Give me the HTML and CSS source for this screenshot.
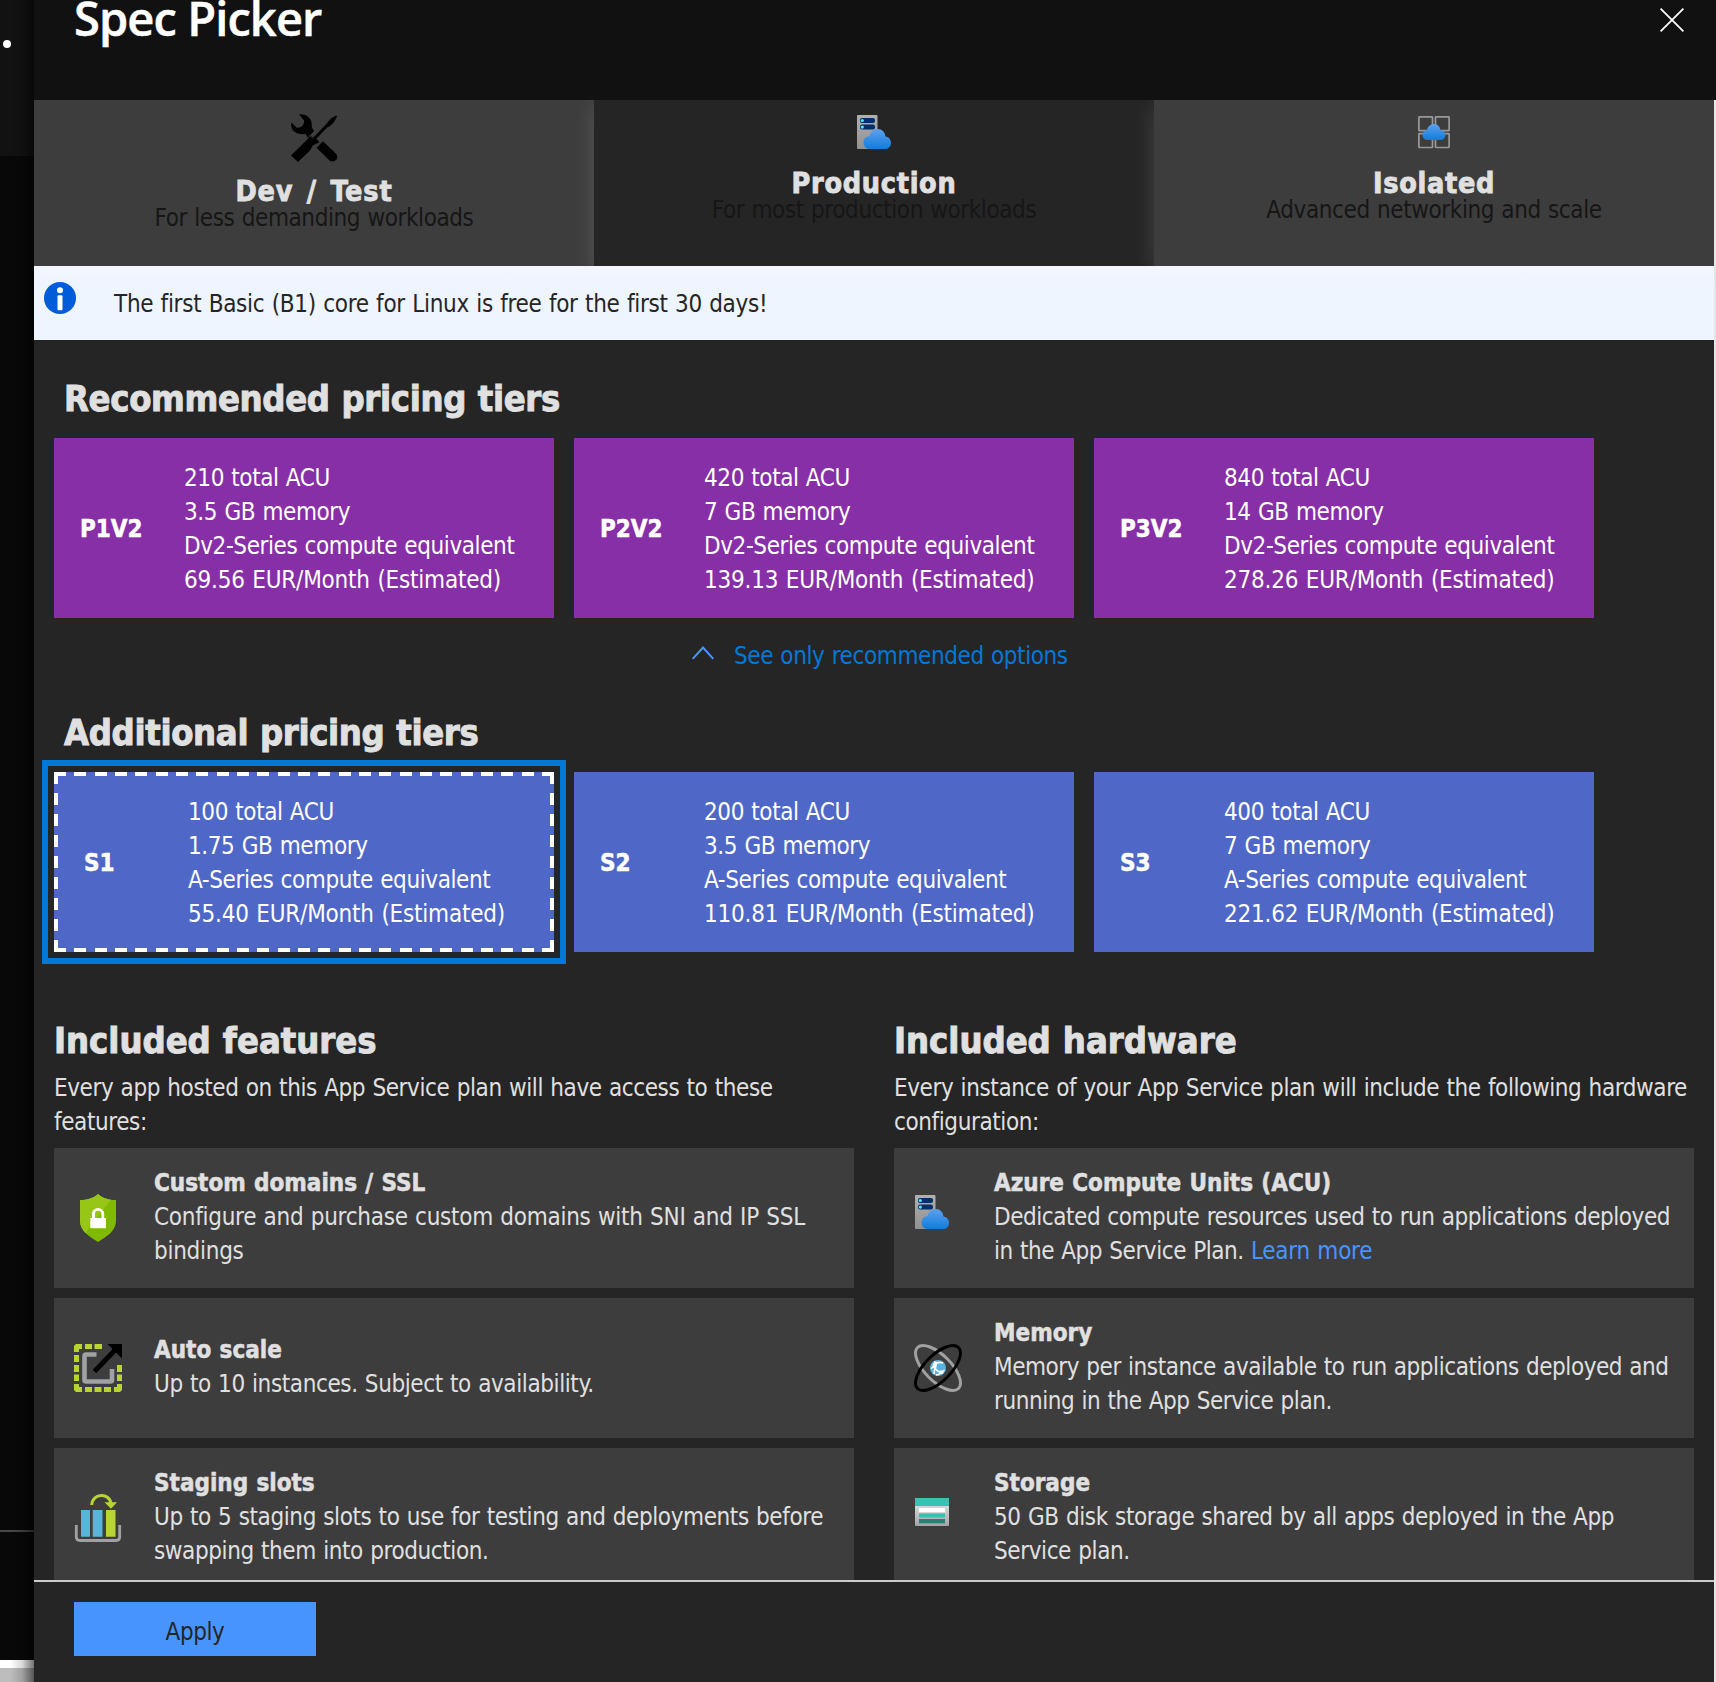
FILE: index.html
```html
<!DOCTYPE html>
<html lang="en">
<head>
<meta charset="utf-8">
<title>Spec Picker</title>
<link rel="stylesheet" href="styles.css">
</head>
<body>
<svg width="0" height="0" class="defs" aria-hidden="true">
  <defs>
    <linearGradient id="cloud" x1="0" y1="0" x2="0" y2="1"><stop offset="0" stop-color="#5ea0ef"/><stop offset="1" stop-color="#0f7ddb"/></linearGradient>
    <linearGradient id="metal" x1="0" y1="0" x2="0" y2="1"><stop offset="0" stop-color="#b0b0b0"/><stop offset="1" stop-color="#919191"/></linearGradient>
    <linearGradient id="paper" x1="0" y1="0" x2="0" y2="1"><stop offset="0" stop-color="#ececec"/><stop offset="1" stop-color="#a3a3a3"/></linearGradient>
    <symbol id="server" viewBox="0 0 34 34">
      <rect width="20.5" height="34" rx="1" fill="url(#metal)"/>
      <rect x="3" y="3" width="15" height="5" rx="2" fill="#003067"/>
      <rect x="3" y="9.6" width="15" height="5" rx="2" fill="#003067"/>
      <circle cx="5.3" cy="5.5" r="1.6" fill="#50e6ff"/><circle cx="5.3" cy="12.1" r="1.6" fill="#50e6ff"/>
      <path d="M12.8 34C9.2 34 6.5 31 6.5 27.4C6.5 23.9 9 21.2 12.5 20.9C13.4 16.9 16.5 14 20.7 14C25 14 28.2 17.3 28.5 21.6C31.7 22 34 24.7 34 27.9C34 31.3 31.4 34 28 34Z" fill="url(#cloud)"/>
    </symbol>
  </defs>
</svg>
<div class="page">
  <aside class="behind">
    <div class="behind-head"><span class="dot"></span></div>
    <div class="behind-main"></div>
    <div class="behind-foot"></div>
    <div class="behind-white"></div>
    <div class="behind-grey"></div>
  </aside>
  <main class="blade">
    <header class="blade-head">
      <h1>Spec Picker</h1>
      <svg class="close" width="24" height="24" viewBox="0 0 24 24" stroke="#fff" stroke-width="1.8"><path d="M.6.6L23.4 23.4M23.4.6L.6 23.4"/></svg>
    </header>
    <nav class="tabs">
      <div class="tab">
        <svg width="48" height="48" viewBox="0 0 48 48">
          <path d="M9 .3C15-.6 20 2.6 21.3 7.6C22.2 11.5 21.3 14 24.2 17L17.6 23.6L15.6 19.8C10 21.4 3.500 18.600 1.800 14.300C1.200 12.500 1 10.800 1.300 8.600L6.800 13.800C11.600 13.900 14.600 10.800 13.900 6.200Z"/>
          <path d="M1 41.500L16.500 26.200L20.300 21.600L24 24.300L27 25.300L29.500 28.200L23 31.300L20 36.500L8 48Z"/>
          <path d="M23.500 25.500L38 10.500" stroke="#000" stroke-width="3"/>
          <path d="M36.200 11.300C37 7.500 42 3 46.300 1.400L47 2.300C45.500 6.500 42 11.500 38 13.200Z"/>
          <path d="M26.500 33.800L33 27.200L46.300 40C49 44.500 45 49 40 47Z"/>
          <path d="M19.500 21.500L23 24.500M26 33.500L29.500 30" stroke="#3d3d3d" stroke-width=".8" fill="none"/>
        </svg>
        <h3 class="wide">Dev / Test</h3>
        <p>For less demanding workloads</p>
      </div>
      <div class="tab active">
        <svg width="40" height="40" viewBox="-3 -1 40 40"><use href="#server" width="34" height="34"/></svg>
        <h3>Production</h3>
        <p>For most production workloads</p>
      </div>
      <div class="tab">
        <svg width="40" height="40" viewBox="-4 -2 40 40">
          <g fill="none" stroke="#999" stroke-width="1.700"><rect x=".9" y=".9" width="13.600" height="13.800" rx=".5"/><rect x="17.500" y=".9" width="13.600" height="13.800" rx=".5"/><rect x=".9" y="17.700" width="13.600" height="13.800" rx=".5"/><rect x="17.500" y="17.700" width="13.600" height="13.800" rx=".5"/></g>
          <path d="M9.500 24C6.700 24 4.500 21.800 4.500 19C4.500 16.200 6.500 14.300 9 14C9.800 10.500 12.500 8 16 8C19.500 8 22 10.400 22.400 13.900C25.200 14.100 27.300 16.200 27.300 19C27.300 21.800 25.200 24 22.400 24Z" fill="url(#cloud)"/>
        </svg>
        <h3>Isolated</h3>
        <p>Advanced networking and scale</p>
      </div>
    </nav>
    <div class="banner">
      <svg width="32" height="32" viewBox="0 0 32 32"><circle cx="16" cy="16" r="16" fill="#015cda"/><circle cx="16" cy="8.300" r="3" fill="#fff"/><rect x="13.500" y="13.300" width="5" height="15" rx="1" fill="#fff"/></svg>
      <p>The first Basic (B1) core for Linux is free for the first 30 days!</p>
    </div>
    <section class="content">
      <h2 class="indent">Recommended pricing tiers</h2>
      <div class="tiers">
        <div class="tier purple"><b>P1V2</b><p>210 total ACU<br>3.5 GB memory<br>Dv2-Series compute equivalent<br><span class="price">69.56 EUR/Month (Estimated)</span></p></div>
        <div class="tier purple"><b>P2V2</b><p>420 total ACU<br>7 GB memory<br>Dv2-Series compute equivalent<br><span class="price">139.13 EUR/Month (Estimated)</span></p></div>
        <div class="tier purple"><b>P3V2</b><p>840 total ACU<br>14 GB memory<br>Dv2-Series compute equivalent<br><span class="price">278.26 EUR/Month (Estimated)</span></p></div>
      </div>
      <a class="toggle"><svg width="22" height="14" viewBox="0 0 22 14" fill="none" stroke="#4894fe" stroke-width="2"><path d="M.700 12.800L11 1.500L21.300 12.800"/></svg><span>See only recommended options</span></a>
      <h2 class="indent">Additional pricing tiers</h2>
      <div class="tiers">
        <div class="tier blue selected"><b>S1</b><p>100 total ACU<br>1.75 GB memory<br>A-Series compute equivalent<br><span class="price">55.40 EUR/Month (Estimated)</span></p></div>
        <div class="tier blue"><b>S2</b><p>200 total ACU<br>3.5 GB memory<br>A-Series compute equivalent<br><span class="price">110.81 EUR/Month (Estimated)</span></p></div>
        <div class="tier blue"><b>S3</b><p>400 total ACU<br>7 GB memory<br>A-Series compute equivalent<br><span class="price">221.62 EUR/Month (Estimated)</span></p></div>
      </div>
      <div class="columns">
        <div class="column">
          <h2>Included features</h2>
          <p class="lead">Every app hosted on this App Service plan will have access to these<br>features:</p>
          <div class="item">
            <svg width="48" height="48" viewBox="0 0 48 48">
              <path d="M24 0C19.500 4.200 13 6 6 6V27C6 37 16 43 24 48C32 43 42 37 42 27V6C35 6 28.500 4.200 24 0Z" fill="#7fba00"/>
              <path d="M24 0C19.500 4.200 13 6 6 6V27C6 32 8.500 36 11.500 39L37 5.800C32 5.200 27.500 3.300 24 0Z" fill="#97c617"/>
              <rect x="16.300" y="24" width="15.700" height="10.200" fill="#fff"/><path d="M19.500 25V20.200C19.500 13.800 28.800 13.800 28.800 20.200V25" fill="none" stroke="#fff" stroke-width="2.800"/>
            </svg>
            <div><b>Custom domains / SSL</b><p class="loose">Configure and purchase custom domains with SNI and IP SSL<br>bindings</p></div>
          </div>
          <div class="item">
            <svg width="48" height="48" viewBox="0 0 48 48">
              <path fill="#b8d432" d="M2 0H8V5H5V8H0V2ZM11 0H18V5H11ZM20.500 0H28V5H20.500ZM0 11H5V18H0ZM0 21H5V28H0ZM0 30.500H5V37H0ZM0 40H5V43H8V48H2L0 46ZM11 43H18V48H11ZM20.500 43H27.500V48H20.500ZM30 43H37V48H30ZM43 40H48V46L46 48H40V43H43ZM43 21H48V28H43ZM43 30.500H48V37H43Z"/>
              <path d="M22.500 10.500H12Q10.500 10.500 10.500 12V36Q10.500 37.500 12 37.500H36.500Q38 37.500 38 36V25" fill="none" stroke="#a0a1a2" stroke-width="4.600"/>
              <path d="M20.500 27.500L42 5" stroke="#000" stroke-width="4.800"/><path d="M33.500 0H48V14.500Z"/>
            </svg>
            <div><b>Auto scale</b><p>Up to 10 instances. Subject to availability.</p></div>
          </div>
          <div class="item">
            <svg width="48" height="48" viewBox="0 0 48 48">
              <path d="M7 16H16V42.700H7ZM18.700 16H28.500V42.700H18.700Z" fill="#59b4d9"/><path d="M32 16H41.500V42.700H32ZM30.500 8.300L43 8.300L37 14.700Z" fill="#b8d432"/>
              <path d="M17.700 11C18.500-1.500 36-1.500 37 10" fill="none" stroke="#b8d432" stroke-width="3"/>
              <path d="M2.300 31V43Q2.300 46.500 6 46.500H42Q45.700 46.500 45.700 43V31" fill="none" stroke="#a0a1a2" stroke-width="2.800"/>
            </svg>
            <div><b>Staging slots</b><p>Up to 5 staging slots to use for testing and deployments before<br>swapping them into production.</p></div>
          </div>
        </div>
        <div class="column">
          <h2>Included hardware</h2>
          <p class="lead">Every instance of your App Service plan will include the following hardware<br>configuration:</p>
          <div class="item">
            <svg width="48" height="48" viewBox="-1 -1 48 48"><use href="#server" width="34" height="34"/></svg>
            <div><b>Azure Compute Units (ACU)</b><p class="tight">Dedicated compute resources used to run applications deployed<br>in the App Service Plan. <a>Learn more</a></p></div>
          </div>
          <div class="item">
            <svg width="48" height="48" viewBox="0 0 48 48" fill="none">
              <ellipse cx="24" cy="24" rx="29" ry="13" transform="rotate(45 24 24)" stroke="#a0a1a2" stroke-width="3"/>
              <ellipse cx="24" cy="24" rx="29" ry="13" transform="rotate(-45 24 24)" stroke="#000" stroke-width="3"/>
              <circle cx="24" cy="24" r="8" fill="#59b4d9"/>
              <path d="M20 17.500Q22.500 19.500 25 18.500M20.500 21Q24 17 29 19M20.500 21Q20 26 27 28.500M17 25Q19 23 20.500 21M20 30Q20 25 22 22.500M27 28.500Q25 31 22 31M27.500 28.500L30.500 26" stroke="#fff" stroke-width="1.600"/>
              <circle cx="20.800" cy="21" r="2.200" fill="#fff"/><circle cx="27.300" cy="28.200" r="2" fill="#fff"/>
            </svg>
            <div><b>Memory</b><p class="tight">Memory per instance available to run applications deployed and<br>running in the App Service plan.</p></div>
          </div>
          <div class="item">
            <svg width="48" height="48" viewBox="-1 -4 48 48"><rect width="34" height="28" rx="1" fill="url(#paper)"/><path d="M0 8V1Q0 0 1 0H33Q34 0 34 1V8Z" fill="#37c2b1"/><rect x="4" y="10" width="26" height="4.300" fill="#fff"/><rect x="4" y="15.500" width="26" height="4" fill="#37c2b1"/><rect x="4" y="21" width="26" height="4.300" fill="#258277"/></svg>
            <div><b>Storage</b><p>50 GB disk storage shared by all apps deployed in the App<br>Service plan.</p></div>
          </div>
        </div>
      </div>
    </section>
    <footer class="blade-foot"><button class="apply">Apply</button></footer>
  </main>
  <div class="edge"></div>
</div>
</body>
</html>
```
FILE: styles.css
```css
* { box-sizing: border-box; }
body {
  margin: 0;
  background: #000;
  color: #e0e0e0;
  font: 24px/34px "DejaVu Sans Condensed", "DejaVu Sans", sans-serif;
  letter-spacing: -0.4px;
  word-spacing: 0.8px;
}
h1, h2, h3, p { margin: 0; }
svg { display: block; flex: none; overflow: visible; }
b { letter-spacing: 0; white-space: nowrap; -webkit-text-stroke: 0.5px currentColor; }
p { white-space: nowrap; }
.defs { position: absolute; }
.page { display: flex; width: 1716px; height: 1682px; overflow: hidden; }

.behind { display: flex; flex-direction: column; width: 34px; background: #080808; position: relative; }
.behind::after { content: ""; position: absolute; inset: 0; background: linear-gradient(90deg, transparent 30%, rgba(0, 0, 0, .15) 65%, rgba(0, 0, 0, .55)); }
.behind-head { height: 156px; padding: 40px 0 0 3px; background: #121212; }
.dot { display: block; width: 8px; height: 8px; border-radius: 50%; background: #fff; }
.behind-main { height: 1374px; }
.behind-foot { height: 130px; border-top: 2px solid #484848; }
.behind-white { height: 8px; background: #fff; }
.behind-grey { flex: 1; background: #bdbdbd; }

.blade { display: flex; flex-direction: column; width: 1680px; background: #252525; }
.blade-head { display: flex; justify-content: space-between; height: 100px; margin-right: -2px; padding: 0 32px 0 40px; background: #111; color: #fff; }
.blade-head h1 { margin-top: -14px; font: 600 47px/64px "Open Sans", sans-serif; letter-spacing: -0.9px; word-spacing: 0; -webkit-text-stroke: 0.5px currentColor; }
.close { margin-top: 8px; }

.tabs { display: grid; grid-template-columns: repeat(3, 560px); height: 166px; overflow: hidden; }
.tab { display: flex; flex-direction: column; align-items: center; padding-top: 14px; background: #3d3d3d; box-shadow: 0 6px 22px rgba(255, 255, 255, .14); }
.tab.active { background: #252525; }
.tab h3 { margin-top: 17px; font-size: 28.5px; line-height: 26px; letter-spacing: 0.7px; -webkit-text-stroke: 0.8px currentColor; }
.tab h3.wide { letter-spacing: 0.9px; word-spacing: 3.5px; }
.tab p { line-height: 26px; color: #161616; }

.banner { display: flex; gap: 38px; height: 74px; padding: 16px 10px; background: linear-gradient(#f2f6ff, #eef5ff 30%); color: #252525; }
.banner p { margin-top: 5px; letter-spacing: -0.3px; }

.content { height: 1240px; padding: 38px 20px 0; overflow: hidden; }
h2 { font-size: 36px; line-height: 42px; letter-spacing: 0; -webkit-text-stroke: 0.9px currentColor; }
.indent { margin: 0 0 18px 10px; letter-spacing: -0.32px; }
.tiers { display: flex; gap: 20px; }
.tier { display: flex; align-items: center; width: 500px; height: 180px; padding: 2px 0 0 26px; color: #fff; }
.tier b { width: 104px; }
.price { letter-spacing: -0.22px; word-spacing: 1px; }
.purple { background: #862fa7; }
.blue { background: #4f68c8; }
.selected {
  padding-left: 30px;
  outline: 6px solid #0078d7;
  outline-offset: 6px;
  background:
    repeating-linear-gradient(90deg, #fff 0 12px, transparent 12px 20.333px) 0 0 / 100% 4px no-repeat,
    repeating-linear-gradient(90deg, #fff 0 12px, transparent 12px 20.333px) 0 100% / 100% 4px no-repeat,
    repeating-linear-gradient(#fff 0 12px, transparent 12px 21px) 0 0 / 4px 100% no-repeat,
    repeating-linear-gradient(#fff 0 12px, transparent 12px 21px) 100% 0 / 4px 100% no-repeat,
    #4f68c8;
}
.toggle { display: flex; align-items: flex-start; gap: 20px; margin: 21px 0 39px 638px; color: #0078d7; }
.toggle svg { margin-top: 7px; }

.columns { display: grid; grid-template-columns: 800px 800px; gap: 40px; margin-top: 68px; }
.lead { margin: 9px 0; }
.item { display: flex; align-items: center; gap: 32px; height: 140px; margin-bottom: 10px; padding-left: 20px; background: #3d3d3d; }
.item > div { padding-bottom: 2px; }
.item a { color: #4894fe; letter-spacing: -0.25px; }
.loose { letter-spacing: -0.27px; }
.tight { letter-spacing: -0.45px; }

.blade-foot { flex: 1; padding: 20px 40px; border-top: 2px solid #ccc; }
.apply { display: block; width: 242px; height: 54px; padding: 6px 0 0; border: 0; background: #4894fe; color: #252525; font: inherit; letter-spacing: inherit; }
.edge { width: 2px; margin-top: 100px; background: #e6e6e6; }
```
